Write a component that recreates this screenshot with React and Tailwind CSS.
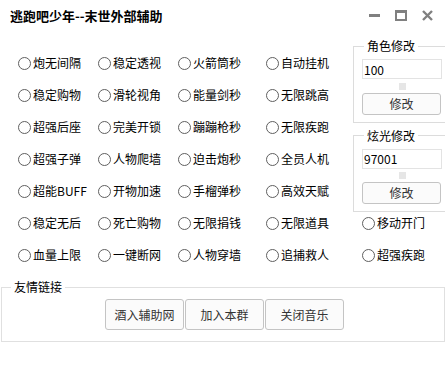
import React from "react";

const FONT = {
  fontFamily: '"Noto Sans CJK SC", "Noto Sans", sans-serif',
};

const TOP_ROWS = [
  ["炮无间隔", "稳定透视", "火箭筒秒", "自动挂机"],
  ["稳定购物", "滑轮视角", "能量剑秒", "无限跳高"],
  ["超强后座", "完美开锁", "蹦蹦枪秒", "无限疾跑"],
  ["超强子弹", "人物爬墙", "迫击炮秒", "全员人机"],
  ["超能BUFF", "开物加速", "手榴弹秒", "高效天赋"],
];

const BOTTOM_ROWS = [
  ["稳定无后", "死亡购物", "无限捐钱", "无限道具", "移动开门"],
  ["血量上限", "一键断网", "人物穿墙", "追捕救人", "超强疾跑"],
];

const COL_W = ["w-[80px]", "w-[80px]", "w-[88px]", "w-[96px]", "w-[80px]"];

const Radio = ({ label, className }) => (
  <label className={`flex items-center gap-[2px] shrink-0 ${className}`}>
    <span className="w-[13px] h-[13px] rounded-full border border-[#5f5f5f] bg-white shrink-0" />
    <span className="text-[12px] leading-none text-black whitespace-nowrap">
      {label}
    </span>
  </label>
);

const RadioRow = ({ items }) => (
  <div className="h-[32px] flex items-center">
    {items.map((t, i) => (
      <Radio key={t} label={t} className={COL_W[i]} />
    ))}
  </div>
);

const EditBox = ({ title, value }) => (
  <fieldset className="border border-[#dcdcdc] px-[8px] pb-[7px] w-[92px]">
    <legend className="ml-[2px] px-[3px] text-[12px] leading-[16px] text-black">
      {title}
    </legend>
    <input
      readOnly
      value={value}
      className="mt-[5px] w-[80px] h-[20px] border border-[#e3e3e3] bg-white px-[1px] text-[12px] text-black outline-none"
    />
    <div className="mt-[3px] mx-auto w-[7px] h-[7px] bg-[#e6e6e6]" />
    <button className="mt-[3px] w-[79px] h-[22px] rounded-[3px] border border-[#c4c4c4] bg-[#fbfbfb] text-[12px] text-[#333]">
      修改
    </button>
  </fieldset>
);

export default function App() {
  return (
    <div className="w-[445px] h-[366px] bg-white overflow-hidden" style={FONT}>
      {/* title bar */}
      <div className="h-[31px] flex items-center justify-between pl-[10px] pr-[12px]">
        <span className="text-[13px] font-bold text-black">
          逃跑吧少年--末世外部辅助
        </span>
        <div className="flex items-center gap-[15px] text-[#808080]">
          <svg width="11" height="11" viewBox="0 0 11 11">
            <rect x="0" y="4" width="11" height="3" fill="currentColor" />
          </svg>
          <svg width="12" height="11" viewBox="0 0 12 11">
            <rect x="1" y="1.5" width="10" height="8.5" fill="none" stroke="currentColor" strokeWidth="2" />
            <rect x="0" y="0" width="12" height="3" fill="currentColor" />
          </svg>
          <svg width="11" height="11" viewBox="0 0 11 11">
            <path d="M1 1 L10 10 M10 1 L1 10" stroke="currentColor" strokeWidth="2.4" />
          </svg>
        </div>
      </div>

      {/* top section */}
      <div className="h-[176px] flex items-start">
        <div className="pt-[16px] pl-[18px] w-[353px] shrink-0">
          {TOP_ROWS.map((r, i) => (
            <RadioRow key={i} items={r} />
          ))}
        </div>
        <div className="pt-[7px] flex flex-col gap-[5px]">
          <EditBox title="角色修改" value="100" />
          <EditBox title="炫光修改" value="97001" />
        </div>
      </div>

      {/* bottom radios */}
      <div className="pl-[18px]">
        {BOTTOM_ROWS.map((r, i) => (
          <RadioRow key={i} items={r} />
        ))}
      </div>

      {/* links */}
      <fieldset className="mt-[8px] ml-[1px] w-[444px] border border-[#e0e0e0] pb-[11px]">
        <legend className="ml-[9px] px-[3px] text-[12px] leading-[16px] text-black">
          友情链接
        </legend>
        <div className="mt-[4px] pl-[103px] flex gap-[1px]">
          {["酒入辅助网", "加入本群", "关闭音乐"].map((t) => (
            <button
              key={t}
              className="w-[79px] h-[31px] rounded-[3px] border border-[#c4c4c4] bg-[#fbfbfb] text-[12px] text-[#333]"
            >
              {t}
            </button>
          ))}
        </div>
      </fieldset>
    </div>
  );
}
